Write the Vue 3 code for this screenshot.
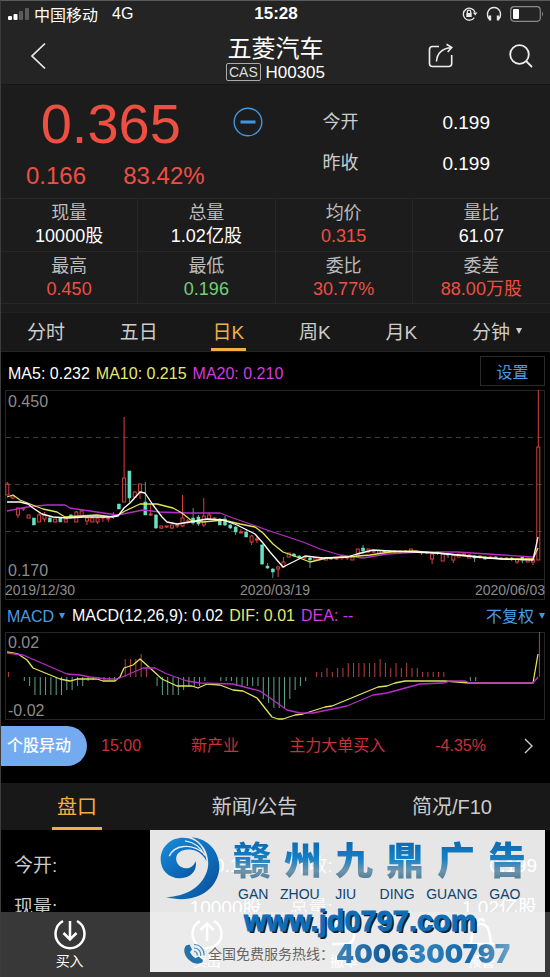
<script setup>
import { ref } from 'vue'

const stats = [
  { label: '现量', value: '10000股', tone: 'plain' },
  { label: '总量', value: '1.02亿股', tone: 'plain' },
  { label: '均价', value: '0.315', tone: 'up' },
  { label: '量比', value: '61.07', tone: 'plain' },
  { label: '最高', value: '0.450', tone: 'up' },
  { label: '最低', value: '0.196', tone: 'down' },
  { label: '委比', value: '30.77%', tone: 'up' },
  { label: '委差', value: '88.00万股', tone: 'up' },
]

const periods = ['分时', '五日', '日K', '周K', '月K', '分钟']
const period = ref('日K')
const sections = ['盘口', '新闻/公告', '简况/F10']
const section = ref('盘口')
const indicator = ref('MACD')
const adjust = ref('不复权')
const pinyin = 'GAN   ZHOU    JIU      DING   GUANG   GAO'

const details = [
  ['今开:', '0.199', '昨收:', '0.199'],
  ['现量:', '10000股', '总量:', '1.02亿股'],
]

// Candle: [index, rising, body top, body bottom, wick top, wick bottom]
const raw = [
  [0, 1, 94, 105, 92, 105], [1, 1, 106, 108, 105, 109], [2, 1, 118, 125, 118, 128], [3, 1, 118, 119, 118, 121],
  [4, 1, 125, 128, 125, 128], [5, 0, 128, 135, 128, 135], [6, 1, 125, 132, 122, 132], [7, 1, 125, 129, 122, 132],
  [8, 0, 128, 132, 127, 132], [9, 1, 129, 132, 129, 132], [10, 0, 128, 132, 127, 132], [11, 1, 129, 132, 128, 132],
  [12, 0, 125, 128, 124, 128], [13, 1, 122, 132, 121, 132], [14, 1, 121, 127, 120, 128], [15, 1, 128, 131, 127, 135],
  [16, 1, 128, 132, 126, 132], [17, 1, 128, 132, 127, 134], [18, 1, 127, 128, 127, 132], [19, 1, 128, 129, 127, 132],
  [20, 1, 126, 127, 122, 129], [21, 0, 114, 119, 114, 119], [22, 1, 88, 112, 27, 112], [23, 0, 81, 108, 81, 112],
  [24, 1, 102, 107, 101, 108], [25, 1, 94, 102, 94, 109], [26, 0, 112, 125, 92, 125], [27, 1, 124, 125, 114, 126],
  [28, 0, 125, 138, 124, 139], [29, 1, 136, 138, 136, 139], [30, 1, 136, 137, 136, 138], [31, 1, 135, 138, 135, 139],
  [32, 1, 135, 136, 134, 138], [33, 1, 128, 136, 105, 137], [34, 1, 131, 132, 129, 134], [35, 0, 128, 133, 118, 135],
  [36, 0, 127, 134, 125, 136], [37, 1, 126, 135, 108, 137], [38, 1, 125, 129, 122, 130], [39, 1, 128, 129, 127, 130],
  [40, 0, 129, 135, 128, 135], [41, 0, 129, 135, 126, 136], [42, 0, 135, 138, 134, 139], [43, 0, 137, 142, 136, 145],
  [44, 1, 142, 143, 139, 143], [45, 0, 142, 147, 139, 147], [46, 1, 146, 152, 145, 155], [47, 1, 149, 150, 147, 153],
  [48, 0, 155, 174, 154, 175], [49, 0, 176, 178, 173, 179], [50, 0, 179, 182, 178, 188], [51, 1, 177, 179, 176, 187],
  [52, 1, 172, 177, 167, 178], [53, 1, 163, 167, 163, 167], [54, 0, 164, 166, 163, 167], [55, 0, 166, 168, 165, 169],
  [56, 1, 167, 168, 166, 169], [57, 0, 168, 170, 166, 178], [58, 1, 168, 170, 167, 171], [59, 1, 168, 169, 167, 170],
  [60, 1, 168, 170, 167, 170], [61, 0, 168, 169, 167, 170], [62, 1, 168, 169, 167, 170], [63, 1, 167, 168, 167, 170],
  [64, 1, 167, 168, 167, 170], [65, 1, 167, 170, 167, 170], [66, 1, 159, 165, 159, 165], [67, 0, 158, 161, 155, 164],
  [68, 1, 159, 162, 159, 163], [69, 1, 161, 162, 160, 163], [70, 1, 161, 163, 160, 164], [71, 0, 161, 162, 160, 163],
  [72, 1, 161, 162, 161, 163], [73, 1, 161, 162, 160, 163], [74, 1, 161, 162, 160, 163], [75, 0, 161, 162, 160, 163],
  [76, 1, 159, 162, 159, 162], [77, 1, 161, 162, 160, 163], [78, 1, 162, 163, 161, 165], [79, 0, 162, 163, 161, 164],
  [80, 1, 164, 169, 163, 174], [81, 0, 162, 163, 162, 165], [82, 1, 164, 171, 164, 171], [83, 0, 164, 165, 163, 168],
  [84, 1, 165, 170, 164, 173], [85, 1, 164, 167, 164, 167], [86, 1, 164, 165, 163, 166], [87, 1, 165, 168, 164, 168],
  [88, 0, 166, 168, 165, 172], [89, 1, 166, 167, 165, 169], [90, 0, 167, 169, 166, 170], [91, 1, 167, 168, 166, 169],
  [92, 0, 167, 168, 166, 169], [93, 1, 168, 169, 167, 170], [94, 1, 168, 169, 167, 170], [95, 0, 168, 169, 167, 171],
  [96, 1, 169, 172, 168, 174], [97, 0, 167, 170, 166, 173], [98, 1, 168, 172, 168, 172], [99, 1, 169, 172, 168, 175],
  [100, 1, 57, 170, 0, 170],
]
const step = 5.31
const candles = raw.map(([i, up, top, bottom, high, low]) => ({
  i, up: !!up, top, height: bottom - top, high, low, x: 2.3 + i * step,
}))

// Histogram bars: [first index, values...], positive above zero
const runs = [
  [0, 5], [3, -4, -9, -18, -18, -18, -18, -18, -18, -13, -13, -9, -9, -4, -3, -3, -3, -3, -3],
  [22, 18, 18, 18, 23, 10], [28, -9, -18, -18, -18, -18, -13, -9, -10, -9, -4],
  [40, -4, -4, -4, -9, -9, -9, -9, -9, -22, -26, -31, -31, -31, -22, -13, -9, -4],
  [58, 5, 5, 9, 5, 9, 9, 14, 14, 14, 14, 14, 14, 18, 14, 9, 14, 9, 14, 9, 9, 5, 5, 5, 5, 5],
  [87, -4, -4], [100, 45],
]
const bars = runs.flatMap(([start, ...values]) =>
  values.map((v, k) => ({ x: 3.3 + (start + k) * step, y: 45 - Math.max(v, 0), h: Math.abs(v), up: v > 0 })))

const ma5 = '2,112 15,112 23,114 28,118 37,124 48,127 62,128 78,127 102,127 113,126 119,118 125,113 135,102 140,103 148,115 157,127 162,132 172,134 185,132 202,129 218,130 232,135 250,144 258,153 265,162 278,177 292,170 300,166 318,168 342,167 352,164 368,160 385,161 408,162 432,163 452,165 482,168 498,169 528,170 533,147'
const ma10 = '2,107 8,105 15,110 25,114 38,119 52,122 60,127 75,126 92,125 108,127 115,124 120,121 135,114 152,114 168,118 177,123 187,131 198,132 218,130 235,134 250,137 258,143 268,154 278,162 292,167 305,172 322,168 342,167 365,165 385,162 408,161 432,163 465,166 498,169 528,169 533,158'
const ma20 = '2,121 22,117 42,115 60,115 65,118 85,121 112,125 118,124 138,120 155,122 182,123 215,123 228,128 248,135 265,141 298,152 315,159 335,165 358,168 382,164 415,162 452,162 498,165 528,167'
const dif = '2,20 13,22 22,28 28,36 55,47 65,49 72,47 92,47 98,49 110,49 115,45 119,36 128,33 135,27 145,36 157,47 172,54 187,54 193,56 202,52 215,53 228,58 238,59 252,66 267,85 273,87 278,87 290,83 298,82 320,75 327,74 373,55 382,54 390,51 400,49 440,49 465,51 528,51 533,22'
const dea = '2,21 18,23 62,42 75,43 85,45 102,47 112,47 122,43 138,36 150,36 162,42 182,49 195,51 228,52 255,59 275,73 282,78 295,81 308,81 342,74 368,63 382,61 415,52 438,51 445,49 460,49 465,51 528,51 533,45'
</script>

<template>
  <div class="app">
    <header class="top">
      <div class="status">
        <div class="carrier">
          <svg width="21" height="12" viewBox="0 0 21 12" aria-hidden="true">
            <rect x="0" y="8" width="4" height="4" rx="1" fill="#fff" />
            <rect x="5.500" y="6" width="4" height="6" rx="1" fill="#fff" />
            <rect x="11" y="3" width="4" height="9" rx="1" fill="#5c5c5c" />
            <rect x="17" y="0" width="4" height="12" rx="1" fill="#5c5c5c" />
          </svg>
          <span>中国移动</span>
          <span class="net">4G</span>
        </div>
        <div class="clock">15:28</div>
        <div class="indicators">
          <svg width="16" height="16" viewBox="0 0 16 16" fill="none" stroke="#e8e8e8" stroke-width="1.300" aria-hidden="true">
            <path d="M12.300 11.600A6 6 0 1 1 13 6.300" />
            <path d="M10.800 6.500h4.600l-2.200 3z" fill="#e8e8e8" stroke="none" />
            <rect x="4.300" y="7" width="5.400" height="4" fill="#e8e8e8" stroke="none" />
            <path d="M5.300 7V5.800a1.700 1.700 0 0 1 3.400 0V7" />
          </svg>
          <svg width="16" height="16" viewBox="0 0 16 16" fill="none" stroke="#e8e8e8" stroke-width="1.400" aria-hidden="true">
            <path d="M2.800 13C-.5 7 3 1.500 8 1.500S16.500 7 13.200 13" />
            <path d="M4 9.500v5M12 9.500v5" stroke-width="2.400" />
          </svg>
          <svg width="34" height="16" viewBox="0 0 34 16" aria-hidden="true">
            <rect x=".7" y=".7" width="29.600" height="14.600" rx="3.500" fill="none" stroke="#8a8a8a" stroke-width="1.200" />
            <rect x="3" y="3" width="6" height="10" rx="1" fill="#fff" />
            <path d="M32 5.500q2 2.500 0 5z" fill="#8a8a8a" />
          </svg>
        </div>
      </div>
      <div class="nav">
        <button class="icon-btn back" aria-label="返回">
          <svg width="16" height="28" viewBox="0 0 16 28" fill="none" stroke="#eee" stroke-width="1.700"><path d="M15 1.500 2 14l13 12.500" /></svg>
        </button>
        <div class="title">
          <h1>五菱汽车</h1>
          <p><span class="tag">CAS</span> H00305</p>
        </div>
        <div class="actions">
          <button class="icon-btn" aria-label="分享">
            <svg width="26" height="26" viewBox="0 0 26 26" fill="none" stroke="#eee" stroke-width="1.600">
              <path d="M11 3.500H4.500a3 3 0 0 0-3 3v14a3 3 0 0 0 3 3h16.200a3 3 0 0 0 3-3V12" />
              <path d="M8.500 18.500C9 11 13 5.500 23.500 4.500M18.500 1.200l5.200 3.200-4 4.600" />
            </svg>
          </button>
          <button class="icon-btn" aria-label="搜索">
            <svg width="26" height="26" viewBox="0 0 26 26" fill="none" stroke="#eee" stroke-width="1.800">
              <circle cx="11.500" cy="11.500" r="9.300" /><path d="m18 18 6 6" />
            </svg>
          </button>
        </div>
      </div>
    </header>

    <section class="quote">
      <div class="price up">
        <strong>0.365</strong>
        <div class="change"><span>0.166</span><span>83.42%</span></div>
      </div>
      <button class="icon-btn minus" aria-label="移除自选">
        <svg width="30" height="30" viewBox="0 0 30 30" fill="none" stroke="#3f97e0">
          <circle cx="15" cy="15" r="13.800" stroke-width="1.400" /><path d="M7.500 15h15" stroke-width="3" />
        </svg>
      </button>
      <dl class="opens">
        <dt>今开</dt><dd>0.199</dd>
        <dt>昨收</dt><dd>0.199</dd>
      </dl>
    </section>

    <dl class="stats">
      <div v-for="s in stats" :key="s.label">
        <dt>{{ s.label }}</dt>
        <dd :class="s.tone">{{ s.value }}</dd>
      </div>
    </dl>

    <nav class="periods">
      <button v-for="p in periods" :key="p" :class="{ active: p === period }" @click="period = p">
        <span>{{ p }}</span>
        <svg v-if="p === '分钟'" width="6" height="6" viewBox="0 0 6 6" aria-hidden="true"><path d="M0 0h6L3 6z" fill="#ccc" /></svg>
      </button>
    </nav>

    <section class="charts">
      <div class="legend">
        <p class="averages"><span>MA5: 0.232</span><span class="yellow">MA10: 0.215</span><span class="violet">MA20: 0.210</span></p>
        <button class="setting">设置</button>
      </div>

      <svg class="chart" viewBox="0 0 540 210" role="img" aria-label="日K线">
        <g fill="none" stroke="#262626">
          <path d="M.5.500h539v209H.5zM.5 189.500h539" />
          <path d="M1 47.500h538M1 94.500h538M1 141.500h538" stroke="#3c3c3c" stroke-dasharray="5 4" />
        </g>
        <g v-for="c in candles" :key="c.i" :class="c.up ? 'rise' : 'fall'">
          <path v-if="c.high < c.top" :d="`M${c.x} ${c.high}V${c.top}`" />
          <path v-if="c.low > c.top + c.height" :d="`M${c.x} ${c.top + c.height}V${c.low}`" />
          <rect :x="c.x - 1.5" :y="c.top" width="3" :height="c.height" />
        </g>
        <g fill="none" stroke-width="1.300" stroke-linejoin="round">
          <polyline :points="ma20" stroke="#b52fc4" />
          <polyline :points="ma10" stroke="#e2e45c" />
          <polyline :points="ma5" stroke="#fff" />
        </g>
        <g class="axis">
          <text x="3" y="17">0.450</text>
          <text x="3" y="186">0.170</text>
        </g>
        <g class="dates">
          <text x="0" y="205">2019/12/30</text>
          <text x="270" y="205" text-anchor="middle">2020/03/19</text>
          <text x="540" y="205" text-anchor="end">2020/06/03</text>
        </g>
      </svg>

      <div class="legend macd">
        <label class="picker">
          <select v-model="indicator" aria-label="指标"><option>MACD</option></select>
          <svg width="6" height="6" viewBox="0 0 6 6" aria-hidden="true"><path d="M0 0h6L3 6z" fill="#3f97e0" /></svg>
        </label>
        <p><span>MACD(12,26,9): 0.02</span><span class="yellow">DIF: 0.01</span><span class="violet">DEA: --</span></p>
        <label class="picker adjust">
          <select v-model="adjust" aria-label="复权"><option>不复权</option></select>
          <svg width="6" height="6" viewBox="0 0 6 6" aria-hidden="true"><path d="M0 0h6L3 6z" fill="#3f97e0" /></svg>
        </label>
      </div>

      <svg class="chart" viewBox="0 0 540 88" role="img" aria-label="MACD">
        <path d="M.5.500h539v87H.5z" fill="none" stroke="#262626" />
        <rect v-for="b in bars" :key="b.x" :x="b.x - 0.4" :y="b.y" width="1" :height="b.h" :fill="b.up ? '#b8423c' : '#5fa58e'" />
        <g fill="none" stroke-width="1.300" stroke-linejoin="round">
          <polyline :points="dif" stroke="#e2e45c" />
          <polyline :points="dea" stroke="#b52fc4" />
        </g>
        <g class="axis">
          <text x="3" y="16">0.02</text>
          <text x="3" y="84">-0.02</text>
        </g>
      </svg>
    </section>

    <section class="alert">
      <span class="pill">个股异动</span>
      <a href="#alerts">
        <span>15:00</span><span>新产业</span><span>主力大单买入</span><span>-4.35%</span>
        <svg width="9" height="16" viewBox="0 0 9 16" fill="none" stroke="#ccc" stroke-width="1.400"><path d="m1 1 7 7-7 7" /></svg>
      </a>
    </section>

    <nav class="sections">
      <button v-for="s in sections" :key="s" :class="{ active: s === section }" @click="section = s"><span>{{ s }}</span></button>
    </nav>

    <section class="details">
      <table>
        <tbody>
          <tr v-for="r in details" :key="r[0]">
            <th>{{ r[0] }}</th><td>{{ r[1] }}</td><th>{{ r[2] }}</th><td>{{ r[3] }}</td>
          </tr>
        </tbody>
      </table>
    </section>

    <nav class="trade">
      <button>
        <svg width="34" height="32" viewBox="0 0 34 32"><path d="M10 3A14.500 14.500 0 1 0 24 3M17 3v18M10.500 15l6.500 6.500 6.500-6.500" /></svg>
        <span>买入</span>
      </button>
      <button>
        <svg width="34" height="32" viewBox="0 0 34 32"><path d="M10 3A14.500 14.500 0 1 0 24 3M17 23V6M10.500 12 17 5.500l6.500 6.500" /></svg>
        <span>卖出</span>
      </button>
      <button>
        <svg width="34" height="32" viewBox="0 0 34 32"><path d="M5 9h16a9 9 0 0 1 0 17H5M11 3 5 9l6 6" /></svg>
        <span>撤单</span>
      </button>
      <button>
        <svg width="34" height="32" viewBox="0 0 34 32"><path d="M4 26h26M7 26c0-5 1-8 2-12a8 8 0 0 1 16 0c1 4 2 7 2 12M14 4a3 3 0 0 1 6 0" /></svg>
        <span>预警</span>
      </button>
    </nav>

    <aside class="promo">
      <div class="brand">
        <svg class="logo" width="60" height="64" viewBox="56 32 182 192" aria-hidden="true">
          <defs>
            <linearGradient id="swirl" x1="0" y1="0" x2="1" y2="1">
              <stop offset="0" stop-color="#1b8fdc" /><stop offset=".6" stop-color="#0d69b8" /><stop offset="1" stop-color="#0c4b94" />
            </linearGradient>
          </defs>
          <path fill="url(#swirl)" d="M198 108C188 66 174 46 142 38 98 28 58 58 58 102c0 33 26 58 60 57 32-1 52-24 46-52-7 18-20 25-36 21-28-8-31-42-6-52 30-11 60 0 76 32Z" />
          <path fill="url(#swirl)" d="M152 35c52 4 85 45 84 93-4 66-73 112-162 88 62 0 116-34 127-88 6-38-10-74-49-93Z" />
          <path fill="none" stroke="#e6edf3" stroke-width="4" d="M84 92c14-32 66-44 108-6M132 46c28 4 48 20 60 44" />
        </svg>
        <div class="names">
          <div class="cn"><span v-for="c in '赣州九鼎广告'" :key="c">{{ c }}</span></div>
          <div class="pinyin" v-text="pinyin"></div>
        </div>
      </div>
      <a class="site" href="#site">www.jd0797.com</a>
      <div class="hotline">
        <svg width="22" height="22" viewBox="0 0 22 22" aria-hidden="true">
          <path fill="#2272ac" d="M3 2.500C0 6 1 12 5.500 16.500S16 22 19.500 19l.5-2-4.500-3.500-3 1.800C10 14 8 11.500 7 9l2-2.500L6.500 1.500Z" />
          <path fill="none" stroke="#4d8fbe" stroke-width="1.200" d="M11 8.500a3 3 0 0 1 3 4M11 5a6.500 6.500 0 0 1 6.500 8M11 1.500a10 10 0 0 1 10 11" />
        </svg>
        <span>全国免费服务热线：</span>
        <strong>4006300797</strong>
      </div>
    </aside>
  </div>
</template>

<style>
body { background: #000; }
</style>

<style scoped>
.app {
  position: relative;
  display: flex;
  flex-direction: column;
  box-sizing: border-box;
  height: 100vh;
  overflow: hidden;
  border-top: 1px solid #5a5a5a;
  border-left: 1px solid #3c3c3c;
  background: #000;
  color: #fff;
  font-family: "Liberation Sans", "Noto Sans CJK SC", sans-serif;
  font-size: 16px;
}
h1, p, dl, dt, dd { margin: 0; font-weight: 400; }
button, select {
  margin: 0;
  padding: 0;
  border: 0;
  background: none;
  color: inherit;
  font: inherit;
  appearance: none;
}
svg { display: block; flex: none; }
.up { color: #ee4f43; }
.down { color: #72d077; }
.yellow { color: #e6ea6c; }
.violet { color: #cf3be0; }

.top { background: #242424; border-bottom: 1px solid #151515; }
.status {
  display: grid;
  grid-template-columns: 1fr auto 1fr;
  align-items: center;
  height: 26px;
  padding: 0 6px 0 7px;
}
.carrier, .indicators { display: flex; align-items: center; gap: 5px; }
.net { margin-left: 9px; }
.clock { font-size: 17px; font-weight: 700; }
.indicators { justify-content: flex-end; gap: 8px; }
.nav {
  display: grid;
  grid-template-columns: 1fr auto 1fr;
  align-items: center;
  height: 57px;
  padding: 0 16px;
}
.icon-btn { display: flex; align-items: center; }
.back { padding-left: 13px; }
.title { padding-top: 6px; text-align: center; }
.title h1 { font-size: 24px; line-height: 28px; }
.title p { font-size: 17px; line-height: 20px; }
.tag {
  display: inline-block;
  padding: 0 2px;
  border: 1px solid #aaa;
  border-radius: 2px;
  color: #ddd;
  font-size: 14px;
  line-height: 16px;
  vertical-align: 1px;
}
.actions { display: flex; justify-content: flex-end; gap: 54px; }

.quote {
  display: flex;
  align-items: flex-start;
  height: 113px;
  background: #1c1c1c;
}
.price { width: 40%; padding-top: 9px; text-align: center; }
.price strong { display: block; font-size: 56px; font-weight: 400; line-height: 60px; }
.change { display: flex; justify-content: space-between; padding: 8px 16px 0 25px; font-size: 24px; line-height: 28px; }
.minus { margin: 22px 0 0 12px; }
.opens {
  display: grid;
  grid-template-columns: auto auto;
  flex: 1;
  justify-content: space-between;
  padding: 17px 60px 0 60px;
  font-size: 18px;
  line-height: 41px;
}
.opens dt { color: #ccc; }
.opens dd { font-size: 19px; }

.stats {
  display: grid;
  grid-template-columns: repeat(4, 1fr);
  padding-bottom: 8px;
  border-bottom: 1px solid #222;
  background: #1c1c1c;
  text-align: center;
  font-size: 18px;
  line-height: 23px;
}
.stats div { padding: 3px 0; border-top: 1px solid #272727; border-right: 1px solid #272727; }
.stats div:nth-child(4n) { border-right: 0; }
.stats div:nth-child(n + 5) { border-bottom: 1px solid #272727; padding-bottom: 2px; }
.stats dt { color: #bbb; }

.periods, .sections { display: flex; justify-content: space-between; background: #181818; color: #ccc; }
.periods { height: 38px; padding: 0 26px 0 24px; border-bottom: 1px solid #242424; font-size: 19px; }
.periods button, .sections button {
  display: flex;
  align-items: center;
  justify-content: center;
  gap: 6px;
  box-sizing: border-box;
  padding: 0 2px;
  border-bottom: 3px solid transparent;
}
.periods .active, .sections .active { border-bottom-color: #f3ae48; color: #f3ae48; }

.charts { padding: 0 5px 0 4px; }
.legend { display: flex; align-items: center; height: 38px; padding-left: 3px; }
.legend p { display: flex; gap: 6px; white-space: nowrap; }
.legend .averages { padding-top: 5px; }
.setting {
  margin-left: auto;
  width: 65px;
  height: 30px;
  border: 1px solid #2a2a2a;
  color: #4c9ce2;
}
.chart { width: 100%; height: auto; }
.rise path, .rise rect { fill: none; stroke: #d8413f; stroke-width: 1; }
.fall path { stroke: #4e9f88; stroke-width: 1; }
.fall rect { fill: #66e0c2; stroke: #66e0c2; stroke-width: 0.500; }
.axis { fill: #8c8c8c; font-size: 16px; }
.dates { fill: #8c8c8c; font-size: 14px; }
.legend.macd { height: 32px; padding: 0 0 0 2px; }
.picker { display: flex; align-items: center; gap: 4px; color: #4c9ce2; }
.macd p { margin-left: 7px; }
.adjust { margin-left: auto; }

.alert { display: flex; align-items: flex-start; padding: 6px 0 17px; }
.pill {
  box-sizing: border-box;
  width: 86px;
  padding-left: 6px;
  border-radius: 0 20px 20px 0;
  background: #74abf0;
  font-weight: 500;
  line-height: 40px;
}
.alert a {
  display: flex;
  flex: 1;
  align-items: center;
  justify-content: space-between;
  padding: 0 17px 0 14px;
  color: #c9303a;
  line-height: 40px;
  text-decoration: none;
}
.alert svg { margin-left: -12px; }

.sections { height: 47px; padding: 0 58px 0 56px; font-size: 20px; }
.sections button { margin: 0 -5px; padding: 0 5px; }

.details { flex: 1; min-height: 0; overflow: hidden; padding: 15px 13px 0; }
table { width: 100%; border-collapse: collapse; table-layout: fixed; font-size: 19px; line-height: 42px; }
th, td { padding: 0; font-weight: 400; }
th { color: #ccc; text-align: left; }
td { text-align: right; }
td:nth-child(2) { padding-right: 14px; }
th:nth-child(3) { padding-left: 14px; }

.trade { display: grid; grid-template-columns: repeat(4, 1fr); height: 65px; background: #383838; }
.trade button { display: flex; flex-direction: column; align-items: center; padding-top: 6px; font-size: 14px; line-height: 22px; }
.trade svg { fill: none; stroke: #fff; stroke-width: 2.500; }

.promo {
  position: absolute;
  right: 5px;
  bottom: 5px;
  box-sizing: border-box;
  width: 395px;
  padding: 6px 10px 0;
  height: 142px;
  background: rgba(255, 255, 255, 0.9);
}
.brand { display: flex; gap: 13px; }
.names { flex: 1; }
.cn {
  display: grid;
  grid-template-columns: repeat(6, 51px);
  font-size: 38px;
  font-weight: 900;
  line-height: 50px;
}
.cn span {
  width: 40px;
  background: linear-gradient(#0d6fb8 20%, #1580c6 45%, #6f95ac 70%, #4c7690 90%);
  background-clip: text;
  color: transparent;
}
.pinyin { padding-left: 5px; color: #0c4470; font-size: 14px; line-height: 16px; white-space: pre; }
.site {
  display: block;
  padding-left: 84px;
  color: #0f6db8;
  font-size: 29px;
  font-weight: 700;
  line-height: 38px;
  text-decoration: none;
  text-shadow: 2px 2px 0 #10202c;
  -webkit-text-stroke: 1px #0f6db8;
}
.hotline { display: flex; align-items: center; padding-left: 23px; color: #666; font-size: 14px; line-height: 28px; white-space: nowrap; }
.hotline span { margin-left: 3px; }
.hotline strong {
  margin-left: 2px;
  background: linear-gradient(90deg, #3d87bb, #115a98 30%, #2f84be 50%, #1668a8 75%, #6aa0c4);
  background-clip: text;
  color: transparent;
  font-family: Inter, "Liberation Sans", sans-serif;
  font-size: 26px;
  font-weight: 900;
}
</style>
